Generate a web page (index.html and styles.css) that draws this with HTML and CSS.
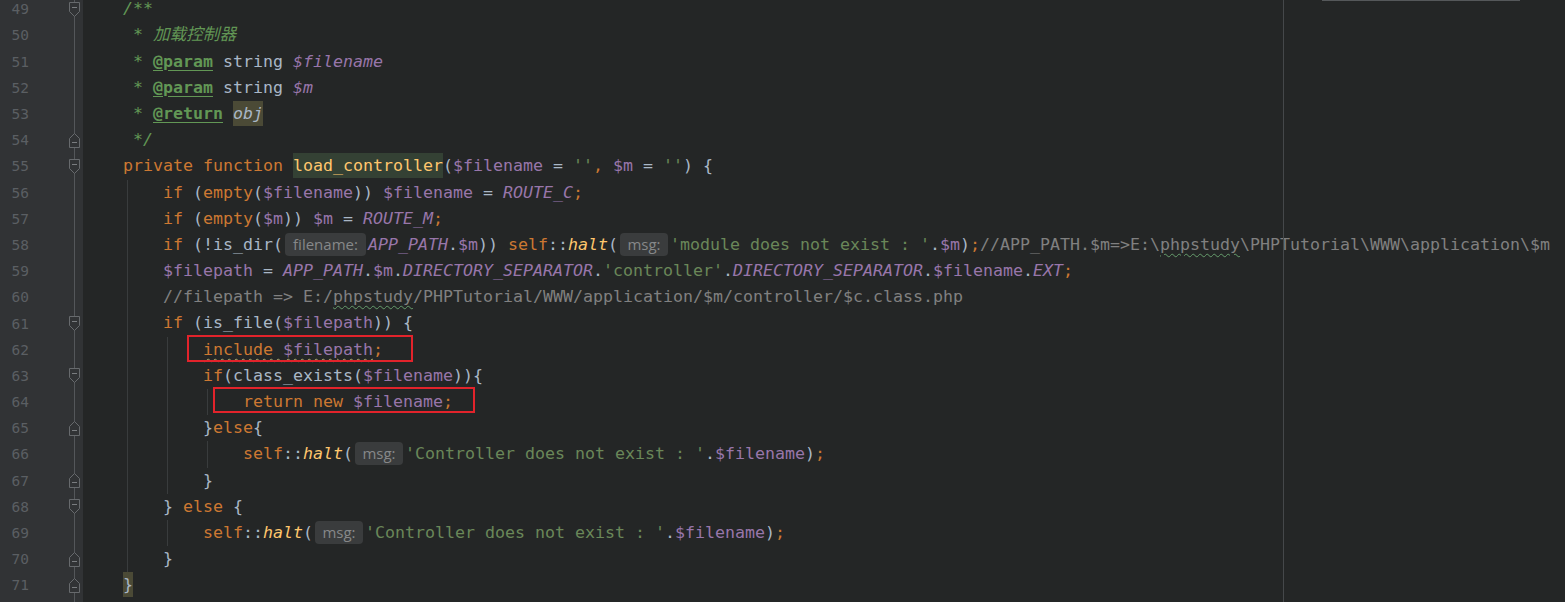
FILE: index.html
```html
<!DOCTYPE html>
<html lang="en">
<head>
<meta charset="utf-8">
<title>load_controller</title>
<link rel="stylesheet" href="styles.css">
</head>
<body>
<div class="editor">
  <div class="gutter">
    <div class="rows">
      <div class="grow"><span class="num">49</span><svg class="fold" viewBox="0 0 11 15"><path class="fb" d="M0.5 0.5H10.5V9.5L5.5 14.5L0.5 9.5Z"/><path class="fm" d="M3 5.5H8"/></svg></div>
      <div class="grow"><span class="num">50</span></div>
      <div class="grow"><span class="num">51</span></div>
      <div class="grow"><span class="num">52</span></div>
      <div class="grow"><span class="num">53</span></div>
      <div class="grow"><span class="num">54</span><svg class="fold" viewBox="0 0 11 15"><path class="fb" d="M0.5 14.5H10.5V5.5L5.5 0.5L0.5 5.5Z"/><path class="fm" d="M3 9.5H8"/></svg></div>
      <div class="grow"><span class="num">55</span><svg class="fold" viewBox="0 0 11 15"><path class="fb" d="M0.5 0.5H10.5V9.5L5.5 14.5L0.5 9.5Z"/><path class="fm" d="M3 5.5H8"/></svg></div>
      <div class="grow"><span class="num">56</span></div>
      <div class="grow"><span class="num">57</span></div>
      <div class="grow"><span class="num">58</span></div>
      <div class="grow"><span class="num">59</span></div>
      <div class="grow"><span class="num">60</span></div>
      <div class="grow"><span class="num">61</span><svg class="fold" viewBox="0 0 11 15"><path class="fb" d="M0.5 0.5H10.5V9.5L5.5 14.5L0.5 9.5Z"/><path class="fm" d="M3 5.5H8"/></svg></div>
      <div class="grow"><span class="num">62</span></div>
      <div class="grow"><span class="num">63</span><svg class="fold" viewBox="0 0 11 15"><path class="fb" d="M0.5 0.5H10.5V9.5L5.5 14.5L0.5 9.5Z"/><path class="fm" d="M3 5.5H8"/></svg></div>
      <div class="grow"><span class="num">64</span></div>
      <div class="grow"><span class="num">65</span><svg class="fold" viewBox="0 0 11 15"><path class="fb" d="M0.5 14.5H10.5V5.5L5.5 0.5L0.5 5.5Z"/><path class="fm" d="M3 9.5H8"/></svg></div>
      <div class="grow"><span class="num">66</span></div>
      <div class="grow"><span class="num">67</span><svg class="fold" viewBox="0 0 11 15"><path class="fb" d="M0.5 14.5H10.5V5.5L5.5 0.5L0.5 5.5Z"/><path class="fm" d="M3 9.5H8"/></svg></div>
      <div class="grow"><span class="num">68</span><svg class="fold" viewBox="0 0 11 15"><path class="fb" d="M0.5 0.5H10.5V9.5L5.5 14.5L0.5 9.5Z"/><path class="fm" d="M3 5.5H8"/></svg></div>
      <div class="grow"><span class="num">69</span></div>
      <div class="grow"><span class="num">70</span><svg class="fold" viewBox="0 0 11 15"><path class="fb" d="M0.5 14.5H10.5V5.5L5.5 0.5L0.5 5.5Z"/><path class="fm" d="M3 9.5H8"/></svg></div>
      <div class="grow"><span class="num">71</span><svg class="fold" viewBox="0 0 11 15"><path class="fb" d="M0.5 14.5H10.5V5.5L5.5 0.5L0.5 5.5Z"/><path class="fm" d="M3 9.5H8"/></svg></div>
    </div>
  </div>
  <div class="code">
    <div class="rows">
<div class="line"><span class="ind">    </span><span class="d">/**</span></div>
<div class="line"><span class="ind">    </span><span class="d"> * 加载控制器</span></div>
<div class="line"><span class="ind">    </span><span class="d"> * <span class="dt">@param</span> <span class="dty">string</span> <span class="dv">$filename</span></span></div>
<div class="line"><span class="ind">    </span><span class="d"> * <span class="dt">@param</span> <span class="dty">string</span> <span class="dv">$m</span></span></div>
<div class="line"><span class="ind">    </span><span class="d"> * <span class="dt">@return</span> <span class="hl hl-obj">obj</span></span></div>
<div class="line"><span class="ind">    </span><span class="d"> */</span></div>
<div class="line"><span class="ind">    </span><span class="k">private function</span> <span class="hl hl-id">load_controller</span>(<span class="v">$filename</span> = <span class="s">''</span><span class="k">,</span> <span class="v">$m</span> = <span class="s">''</span>) {</div>
<div class="line"><span class="ind">    </span><span class="ind g">    </span><span class="k">if</span> (<span class="k">empty</span>(<span class="v">$filename</span>)) <span class="v">$filename</span> = <span class="vi">ROUTE_C</span><span class="k">;</span></div>
<div class="line"><span class="ind">    </span><span class="ind g">    </span><span class="k">if</span> (<span class="k">empty</span>(<span class="v">$m</span>)) <span class="v">$m</span> = <span class="vi">ROUTE_M</span><span class="k">;</span></div>
<div class="line"><span class="ind">    </span><span class="ind g">    </span><span class="k">if</span> (!is_dir(<span class="hint hint-fn">filename:</span><span class="vi">APP_PATH</span>.<span class="v">$m</span>)) <span class="k">self</span>::<span class="sm">halt</span>(<span class="hint hint-msg">msg:</span><span class="s">'module does not exist : '</span>.<span class="v">$m</span>)<span class="k">;</span><span class="c">//APP_PATH.$m=&gt;E:\<span class="typo">phpstudy</span>\PHPTutorial\WWW\application\$m</span></div>
<div class="line"><span class="ind">    </span><span class="ind g">    </span><span class="v">$filepath</span> = <span class="vi">APP_PATH</span>.<span class="v">$m</span>.<span class="vi">DIRECTORY_SEPARATOR</span>.<span class="s">'controller'</span>.<span class="vi">DIRECTORY_SEPARATOR</span>.<span class="v">$filename</span>.<span class="vi">EXT</span><span class="k">;</span></div>
<div class="line"><span class="ind">    </span><span class="ind g">    </span><span class="c">//filepath =&gt; E:/<span class="typo">phpstudy</span>/PHPTutorial/WWW/application/$m/controller/$c.class.php</span></div>
<div class="line"><span class="ind">    </span><span class="ind g">    </span><span class="k">if</span> (is_file(<span class="v">$filepath</span>)) {</div>
<div class="line"><span class="ind">    </span><span class="ind g">    </span><span class="ind g">    </span><span class="weak"><span class="k">include</span> <span class="v">$filepath</span></span><span class="k">;</span></div>
<div class="line"><span class="ind">    </span><span class="ind g">    </span><span class="ind g">    </span><span class="k">if</span>(class_exists(<span class="v">$filename</span>)){</div>
<div class="line"><span class="ind">    </span><span class="ind g">    </span><span class="ind g">    </span><span class="ind g">    </span><span class="k">return new</span> <span class="v">$filename</span><span class="k">;</span></div>
<div class="line"><span class="ind">    </span><span class="ind g">    </span><span class="ind g">    </span>}<span class="k">else</span>{</div>
<div class="line"><span class="ind">    </span><span class="ind g">    </span><span class="ind g">    </span><span class="ind g">    </span><span class="k">self</span>::<span class="sm">halt</span>(<span class="hint hint-msg">msg:</span><span class="s">'Controller does not exist : '</span>.<span class="v">$filename</span>)<span class="k">;</span></div>
<div class="line"><span class="ind">    </span><span class="ind g">    </span><span class="ind g">    </span>}</div>
<div class="line"><span class="ind">    </span><span class="ind g">    </span>} <span class="k">else</span> {</div>
<div class="line"><span class="ind">    </span><span class="ind g">    </span><span class="ind g">    </span><span class="k">self</span>::<span class="sm">halt</span>(<span class="hint hint-msg">msg:</span><span class="s">'Controller does not exist : '</span>.<span class="v">$filename</span>)<span class="k">;</span></div>
<div class="line"><span class="ind">    </span><span class="ind g">    </span>}</div>
<div class="line"><span class="ind">    </span><span class="hl hl-brace">}</span></div>
    </div>
  </div>
  <div class="margin-line"></div>
  <div class="top-bar"></div>
  <div class="mark mark-include"></div>
  <div class="mark mark-return"></div>
</div>
</body>
</html>
```

FILE: styles.css
```css
html, body {
  margin: 0;
  padding: 0;
  height: 100%;
  overflow: hidden;
  background: #242626;
}

.editor {
  position: relative;
  display: flex;
  height: 602px;
  overflow: hidden;
  background: #242626;
}

.rows {
  margin-top: -3.8px;
}

/* ---------- gutter ---------- */
.gutter {
  flex: none;
  width: 83px;
  background:
    linear-gradient(#54575a, #54575a) 74px 0 / 1px 100% no-repeat,
    #313335;
}

.grow {
  display: flex;
  align-items: center;
  height: 26.19px;
}

.num {
  width: 29px;
  text-align: right;
  font-family: "DejaVu Sans Mono", monospace;
  font-size: 14.5px;
  color: #5b5f63;
}

.fold {
  width: 11px;
  height: 15px;
  margin-left: 40px;
  flex: none;
}

.fb {
  fill: #313335;
  stroke: #676a6d;
  stroke-width: 1;
}

.fm {
  stroke: #7a7d80;
  stroke-width: 1;
}

/* ---------- code ---------- */
.code {
  flex: 1;
  min-width: 0;
  font-family: "DejaVu Sans Mono", "Noto Sans CJK SC", monospace;
  font-size: 16.61px;
  color: #a9b7c6;
}

.line {
  height: 26.19px;
  line-height: 26.19px;
  white-space: pre;
}

.ind {
  display: inline-block;
  width: 40px;
  height: 26.19px;
  vertical-align: top;
}

.ind.g {
  background: linear-gradient(#393c3d, #393c3d) 4px 0 / 1px 100% no-repeat;
}

.k { color: #cc7832; }
.v { color: #9876aa; }
.vi { color: #9876aa; font-style: italic; }
.s { color: #6a8759; }
.c { color: #808080; }
.d { color: #629755; font-style: italic; }
.dt {
  font-weight: bold;
  font-style: normal;
  text-decoration: underline;
  text-underline-offset: 3px;
}
.dty { color: #a9b7c6; font-style: normal; }
.dv { color: #9876aa; font-style: italic; }
.sm { color: #ffc66d; font-style: italic; }

.hl {
  display: inline-block;
  height: 25px;
  vertical-align: top;
  margin-top: 0;
  line-height: 26.19px;
}
.hl-obj { background: #4b4a36; color: #a9b7c6; font-style: italic; }
.hl-id { background: #344134; color: #ffc66d; }
.hl-brace { background: #4b4a36; }

.typo {
  text-decoration: underline wavy #659c6b;
  text-decoration-thickness: 1px;
  text-underline-offset: 3px;
}

.weak {
  text-decoration: underline wavy #a9a66a;
  text-decoration-thickness: 1px;
  text-underline-offset: 3px;
}

.hint {
  display: inline-block;
  vertical-align: top;
  height: 23px;
  margin: 1px 2px 0;
  line-height: 23px;
  background: #3a3c3d;
  border-radius: 4px;
  color: #868889;
  font-family: "Open Sans", sans-serif;
  font-size: 15px;
  text-align: center;
}
.hint-fn { width: 81px; }
.hint-msg { width: 48px; }

/* ---------- overlays ---------- */
.margin-line {
  position: absolute;
  left: 1283px;
  top: 0;
  bottom: 0;
  width: 1px;
  background: #45484a;
}

.top-bar {
  position: absolute;
  left: 1322px;
  top: 0;
  width: 198px;
  height: 1px;
  background: #55585a;
}

.mark {
  position: absolute;
  box-sizing: border-box;
  border: 2px solid #e2232b;
}
.mark-include { left: 187px; top: 335px; width: 226px; height: 27px; }
.mark-return { left: 213px; top: 387px; width: 262px; height: 26px; }
```
